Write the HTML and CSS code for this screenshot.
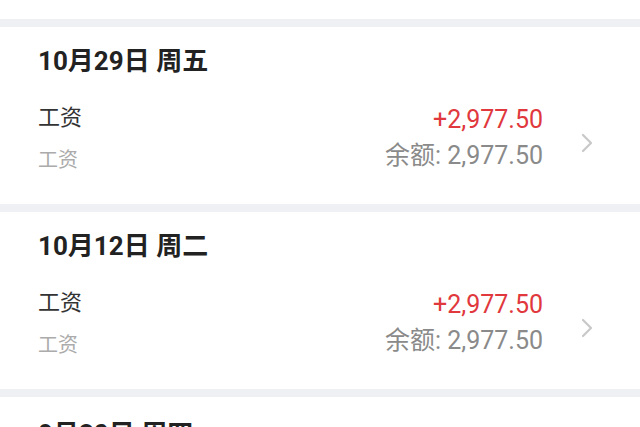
FILE: index.html
```html
<!DOCTYPE html>
<html lang="zh-CN">
<head>
    <meta charset="UTF-8">
    <meta name="viewport" content="width=device-width, initial-scale=1.0">
    <title>收支明细</title>
    <link rel="stylesheet" href="styles.css">
</head>
<body>
    <div class="card card-prev"></div>

    <div class="card">
        <div class="date">10月29日 周五</div>
        <div class="record">
            <div class="record-left">
                <div class="title">工资</div>
                <div class="sub">工资</div>
            </div>
            <div class="record-right">
                <div class="amount">+2,977.50</div>
                <div class="balance">余额: 2,977.50</div>
            </div>
            <svg class="arrow" width="14" height="20" viewBox="0 0 14 20">
                <path d="M3 2 L11 10 L3 18" fill="none" stroke="#c8c8c8" stroke-width="2.2" stroke-linecap="round" stroke-linejoin="round"/>
            </svg>
        </div>
    </div>

    <div class="card">
        <div class="date">10月12日 周二</div>
        <div class="record">
            <div class="record-left">
                <div class="title">工资</div>
                <div class="sub">工资</div>
            </div>
            <div class="record-right">
                <div class="amount">+2,977.50</div>
                <div class="balance">余额: 2,977.50</div>
            </div>
            <svg class="arrow" width="14" height="20" viewBox="0 0 14 20">
                <path d="M3 2 L11 10 L3 18" fill="none" stroke="#c8c8c8" stroke-width="2.2" stroke-linecap="round" stroke-linejoin="round"/>
            </svg>
        </div>
    </div>

    <div class="card card-last">
        <div class="date">9月30日 周四</div>
    </div>
</body>
</html>
```

FILE: styles.css
```css
body {
    margin: 0;
    background: #eef0f3;
    font-family: Roboto, "Noto Sans CJK SC", sans-serif;
    height: 427px;
    overflow: hidden;
}
.card {
    background: #fff;
    margin-bottom: 8px;
    padding: 17px 0 0 38px;
    height: 160px;
}
.card-prev {
    height: 19px;
    padding: 0;
}
.card-last {
    height: 40px;
    padding-top: 20px;
}
.date {
    font-size: 26px;
    line-height: 34px;
    font-weight: 700;
    color: #222;
}
.record {
    display: flex;
    align-items: flex-start;
    margin-top: 20px;
    padding-right: 46px;
}
.record-left {
    flex: 1;
}
.title {
    font-size: 22px;
    line-height: 40px;
    color: #333;
}
.sub {
    font-size: 20px;
    line-height: 36px;
    margin-top: 4px;
    color: #ababab;
}
.record-right {
    text-align: right;
    padding-top: 4px;
}
.amount {
    font-size: 25px;
    line-height: 36px;
    color: #e0383d;
}
.balance {
    font-size: 25px;
    line-height: 36px;
    color: #8a8a8a;
}
.arrow {
    margin-left: 37px;
    margin-top: 35px;
}
```
